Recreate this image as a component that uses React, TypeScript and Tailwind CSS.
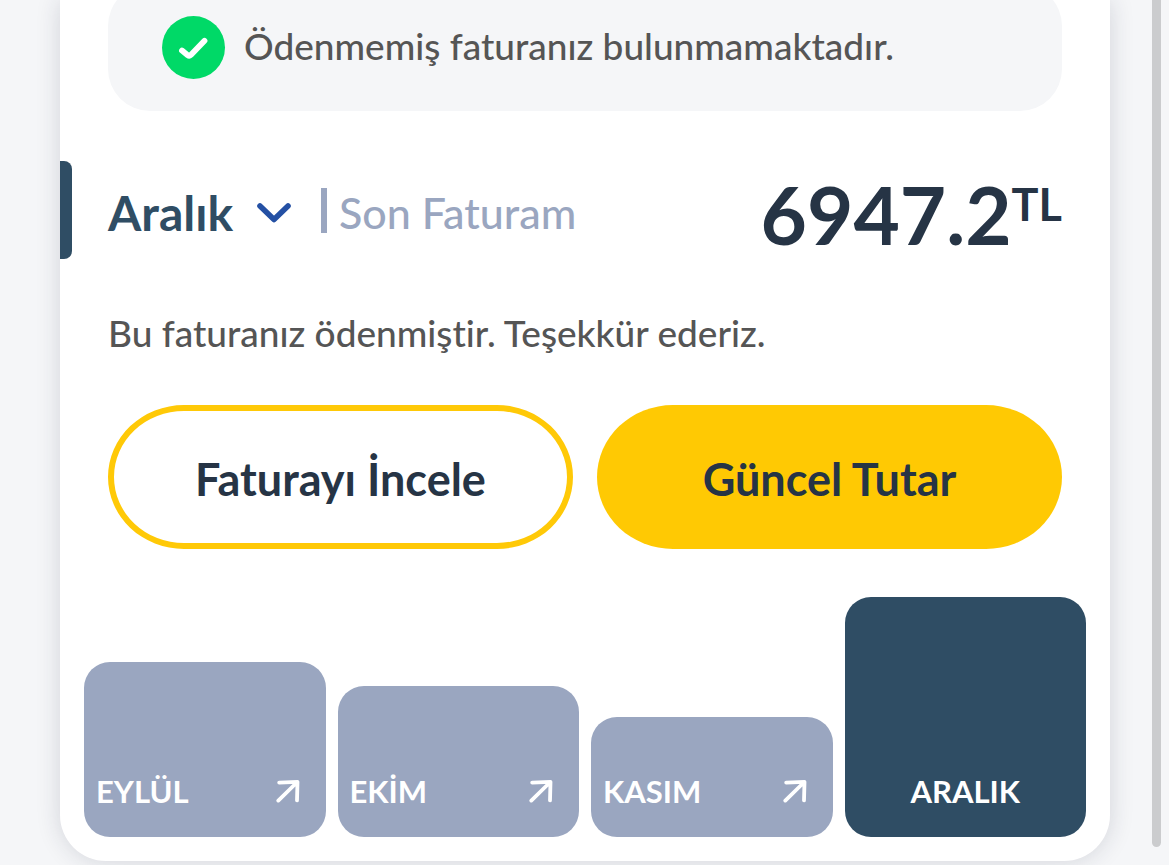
import { useState } from "react";

type Month = { name: string; label: string; height: string };

const months: Month[] = [
  { name: "Eylül", label: "EYLÜL", height: "h-[175px]" },
  { name: "Ekim", label: "EKİM", height: "h-[151px]" },
  { name: "Kasım", label: "KASIM", height: "h-[120px]" },
  { name: "Aralık", label: "ARALIK", height: "h-[240px]" },
];

function CheckBadge() {
  return (
    <svg viewBox="0 0 64 64" className="size-16 shrink-0" aria-hidden="true">
      <circle cx="31.5" cy="31.5" r="31.5" fill="#00d967" />
      <path
        d="M20 34.5 L25.7 39.2 Q27.3 40.4 28.8 39 L42.5 24.8"
        fill="none"
        stroke="#fff"
        strokeWidth="5.8"
        strokeLinecap="round"
        strokeLinejoin="round"
      />
    </svg>
  );
}

function ChevronIcon() {
  return (
    <svg viewBox="0 0 34 20" className="h-5 w-[34px]" fill="none" aria-hidden="true">
      <path
        d="M3 3 L17 16.5 L31 3"
        stroke="#2450a4"
        strokeWidth="5.6"
        strokeLinecap="round"
        strokeLinejoin="round"
      />
    </svg>
  );
}

function ArrowIcon() {
  return (
    <svg viewBox="0 0 24 24" className="size-6" fill="none" aria-hidden="true">
      <path
        d="M3.2 3.6 L21.5 2.8 L21 21.4 M20.8 3.5 L2.3 21.6"
        stroke="#fff"
        strokeWidth="3.8"
        strokeLinecap="round"
        strokeLinejoin="round"
      />
    </svg>
  );
}

function MonthBar({ month, active, onSelect }: { month: Month; active: boolean; onSelect: () => void }) {
  return (
    <button
      type="button"
      onClick={onSelect}
      aria-pressed={active}
      className={`${month.height} flex items-end rounded-[26px] pb-6 pl-3 text-[31px] leading-[44px] font-bold text-white ${
        active ? "justify-center bg-[#2f4d64] pr-3" : "justify-between bg-[#9aa6c0] pr-[26px]"
      }`}
    >
      <span>{month.label}</span>
      {!active && (
        <span className="flex h-11 items-center">
          <ArrowIcon />
        </span>
      )}
    </button>
  );
}

export default function App() {
  const [selected, setSelected] = useState("Aralık");

  return (
    <div className="flex h-screen items-start overflow-hidden bg-[#f5f6f8] pr-2 pl-[60px] font-['Lato',sans-serif] text-[#263445] [font-variant-ligatures:none]">
      <main className="min-w-0 flex-1 rounded-b-[46px] bg-white pb-6 shadow-[0_0_24px_rgba(30,40,60,0.16)]">
        <div className="px-12">
          <p className="-mt-4 flex h-[127px] items-center gap-[18px] rounded-[42px] bg-[#f5f6f8] pl-[54px] text-[37px] font-medium text-[#555]">
            <CheckBadge />
            <span className="pb-1">Ödenmemiş faturanız bulunmamaktadır.</span>
          </p>
        </div>

        <section className="mt-[50px] flex h-[98px] items-center pr-12">
          <span className="h-full w-3 rounded-r-lg bg-[#2f4d64]" />
          <button type="button" className="ml-9 flex items-center gap-6 pt-1.5 text-[48px] leading-[56px] font-bold text-[#2f4d64]">
            {selected}
            <ChevronIcon />
          </button>
          <span className="ml-[30px] h-[45px] w-1.5 bg-[#9aa6c0]" />
          <span className="ml-3 pt-1.5 text-[43px] font-medium text-[#9aa6c0]">Son Faturam</span>
          <p className="ml-auto flex items-start pt-2 font-bold">
            <span className="text-[80px] leading-[96px]">6947.2</span>
            <span className="text-[45px] leading-[76px]">TL</span>
          </p>
        </section>

        <div className="px-12">
          <p className="mt-[46px] text-[37px] leading-[56px] font-medium text-[#555]">
            Bu faturanız ödenmiştir. Teşekkür ederiz.
          </p>
          <div className="mt-11 grid grid-cols-2 gap-6 text-[45px] font-bold">
            <button type="button" className="h-36 rounded-[76px/72px] border-6 border-[#ffc907] bg-white pt-1.5">
              Faturayı İncele
            </button>
            <button type="button" className="h-36 rounded-[76px/72px] bg-[#ffc903] pt-1.5">
              Güncel Tutar
            </button>
          </div>
        </div>

        <div className="mt-12 grid grid-cols-4 items-end gap-3 px-6">
          {months.map((month) => (
            <MonthBar
              key={month.name}
              month={month}
              active={month.name === selected}
              onSelect={() => setSelected(month.name)}
            />
          ))}
        </div>
      </main>
      <div className="ml-[42px] h-full w-[9px] pb-[18px]">
        <div className="h-full rounded-b-full bg-[#cbccce]" />
      </div>
    </div>
  );
}
